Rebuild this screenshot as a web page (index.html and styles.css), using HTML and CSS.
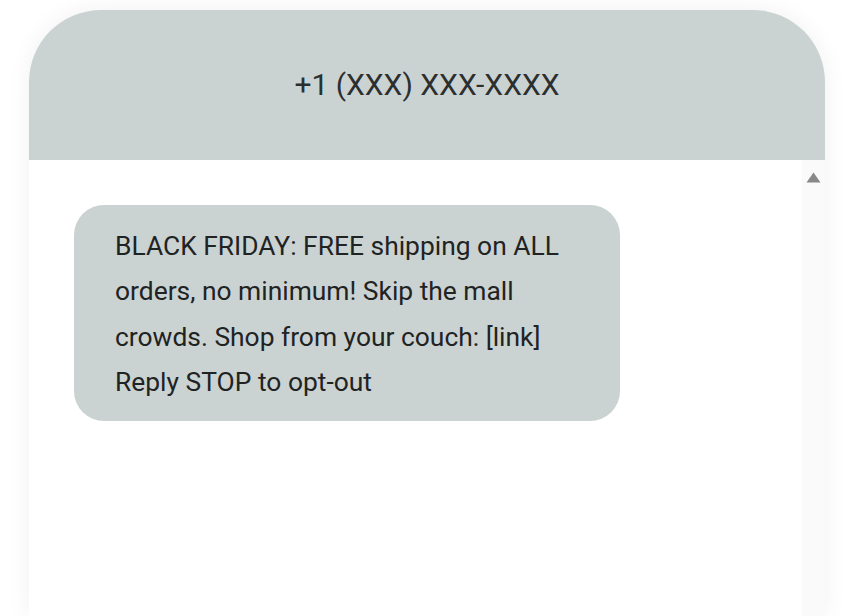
FILE: index.html
```html
<!DOCTYPE html>
<html>
<head>
<meta charset="utf-8">
<link rel="stylesheet" href="styles.css">
</head>
<body>
<div class="phone">
  <div class="header">+1 (XXX) XXX-XXXX</div>
  <div class="body">
    <div class="messages">
      <div class="bubble">BLACK FRIDAY: FREE shipping on ALL orders, no minimum! Skip the mall crowds. Shop from your couch: [link] Reply STOP to opt-out</div>
    </div>
    <div class="track">
      <svg class="arrow" width="15" height="11" viewBox="0 0 15 11"><path d="M7.5 0.5 L14.5 10.5 L0.5 10.5 Z" fill="#888888"/></svg>
    </div>
  </div>
</div>
</body>
</html>
```
FILE: styles.css
```css
html, body {
  margin: 0;
  padding: 0;
  background: #ffffff;
  overflow: hidden;
}
body {
  width: 852px;
  height: 616px;
  font-family: Roboto, "Liberation Sans", sans-serif;
  padding-top: 10px;
  box-sizing: border-box;
}
.phone {
  margin-left: 29px;
  width: 796px;
  height: 606px;
  background: #ffffff;
  border-radius: 72px 72px 0 0;
  box-shadow: 0 0 24px rgba(0, 0, 0, 0.06);
  display: flex;
  flex-direction: column;
  overflow: hidden;
}
.header {
  height: 150px;
  flex: none;
  background: #cbd3d2;
  color: #2b2f2f;
  font-size: 30px;
  display: flex;
  align-items: center;
  justify-content: center;
  padding-bottom: 1px;
  box-sizing: border-box;
}
.body {
  flex: 1;
  display: flex;
}
.messages {
  flex: 1;
  padding: 45px 0 0 45px;
}
.bubble {
  width: 546px;
  box-sizing: border-box;
  background: #cbd3d2;
  border-radius: 30px;
  padding: 19px 40px 16px 41px;
  font-size: 26.4px;
  line-height: 45.3px;
  color: #1f2323;
}
.track {
  width: 23px;
  flex: none;
  background: #fafafa;
  display: flex;
  justify-content: center;
  padding-top: 12px;
  box-sizing: border-box;
}
.arrow {
  display: block;
}
```
